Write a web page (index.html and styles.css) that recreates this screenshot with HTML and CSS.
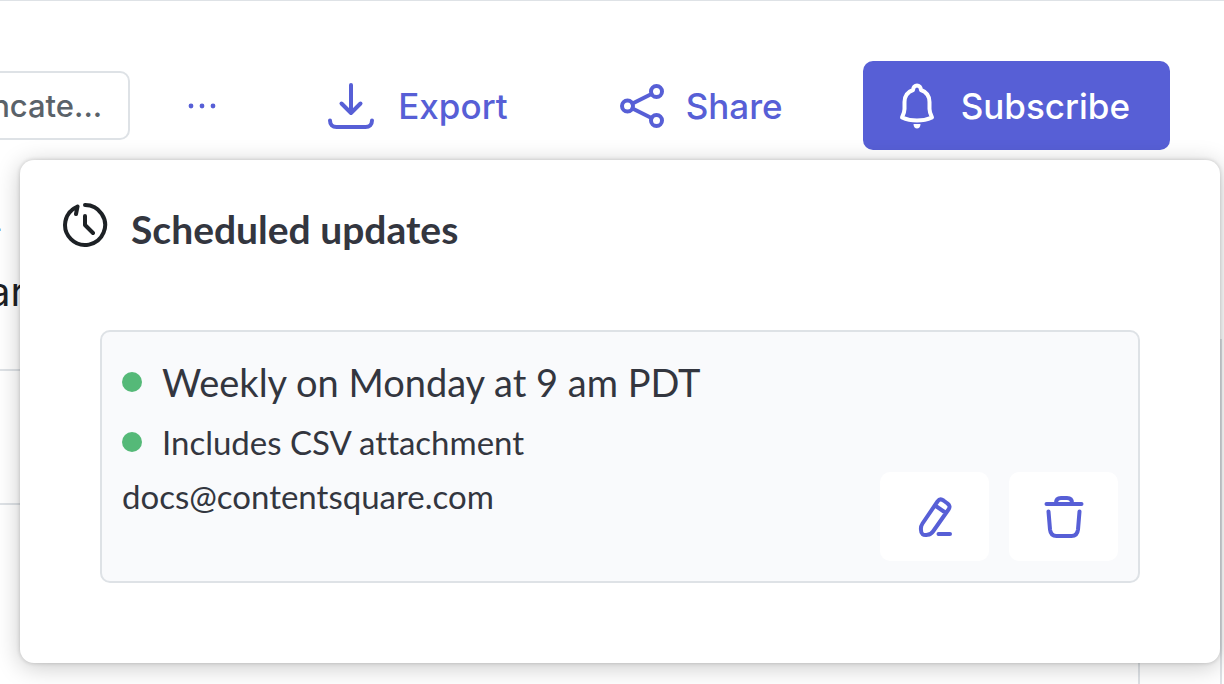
FILE: index.html
```
<!DOCTYPE html>
<html lang="en">
<head>
  <meta charset="UTF-8" />
  <meta name="viewport" content="width=device-width, initial-scale=1.0"/>
  <title>Scheduled updates</title>
  <link rel="stylesheet" href="styles.css">
</head>
<body>

  <header class="toolbar">
    <button type="button" class="filter">Truncate...</button>
    <button type="button" class="tool more" aria-label="More actions">
      <svg width="28" height="6" viewBox="0 0 28 6" fill="currentColor">
        <circle cx="3" cy="3" r="2.4"/><circle cx="14" cy="3" r="2.4"/><circle cx="25" cy="3" r="2.4"/>
      </svg>
    </button>
    <button type="button" class="tool export">
      <svg class="icon" viewBox="0 0 48 48">
        <path d="M24 3V31M14.500 21.500L24 31l9.500-9.500M3 38.500c0 4 2.500 6.500 6.500 6.500h29c4 0 6.500-2.500 6.500-6.500"/>
      </svg>
      Export
    </button>
    <button type="button" class="tool share">
      <svg class="icon" viewBox="0 0 48 48">
        <circle cx="9.500" cy="24" r="5.500"/><circle cx="38.500" cy="9.500" r="5.500"/><circle cx="38.500" cy="38.500" r="5.500"/>
        <path d="M14.500 21.500l19-9.500M14.500 26.500l19 9.500"/>
      </svg>
      Share
    </button>
    <button type="button" class="tool subscribe">
      <svg class="icon" viewBox="0 0 48 48">
        <path d="M20 8C20 2 28 2 28 8C33.500 10 36.500 14 36.500 20V27c0 3.500 1 5.500 2.500 8.500C30 39.500 18 39.500 9 35.500c1.500-3 2.500-5 2.500-8.500V20C11.500 14 14.500 10 20 8z"/>
        <path d="M20.500 42h7c0 6-7 6-7 0z" fill="currentColor" stroke="none"/>
      </svg>
      Subscribe
    </button>
  </header>

  <main class="page">
    <p class="page-note">-</p>
    <h1 class="page-title">ar</h1>
    <div class="page-body">
      <div class="grid">
        <div class="grid-row"></div>
      </div>
    </div>
  </main>

  <section class="popover" aria-labelledby="popover-title">
    <div class="popover-head">
      <svg class="icon clock" viewBox="0 0 48 48">
        <path d="M24 4a20 20 0 1 1-7.500 1.500M16.500 5.500C11 8 4 14 4 24M16.500 5.500L15 13M24 15v9l8 8"/>
      </svg>
      <h2 id="popover-title">Scheduled updates</h2>
    </div>

    <div class="schedule">
      <div class="schedule-info">
        <p class="schedule-line schedule-time"><span class="dot"></span>Weekly on Monday at 9 am PDT</p>
        <p class="schedule-line"><span class="dot"></span>Includes CSV attachment</p>
        <p class="schedule-mail">docs@contentsquare.com</p>
      </div>
      <div class="schedule-actions">
        <button type="button" class="action" aria-label="Edit">
          <svg class="icon" viewBox="0 0 48 48">
            <path d="M26.500 8.500q2.500-3.500 6-1l4 3q3.500 2.500 1 6L22 38.500q-2 2.800-5.500 3.300c-4.500 1-6.500-1-6.500-4.800q-.5-3.500 1.500-6.500zM24 12.500l11 7.500M27.500 41h11.500"/>
          </svg>
        </button>
        <button type="button" class="action" aria-label="Delete">
          <svg class="icon" viewBox="0 0 48 48">
            <path d="M6.500 11h35M16 10c0-4 2-5 5-5h6c3 0 5 1 5 5M8.500 18.500l1.500 18c.5 4.500 2.500 6.500 6.500 6.500h15c4 0 6-2 6.500-6.500l1.500-18"/>
          </svg>
        </button>
      </div>
    </div>
  </section>

</body>
</html>
```

FILE: styles.css
```
* {
  box-sizing: border-box;
}

body {
  margin: 0;
  height: 100vh;
  display: flex;
  flex-direction: column;
  position: relative;
  overflow: hidden;
  background: #fff;
  color: #33363f;
  font-family: Lato, "Liberation Sans", sans-serif;
  font-size: 33px;
  font-variant-ligatures: none;
}

h1, h2, p {
  margin: 0;
}

button {
  font: inherit;
  border: 0;
  cursor: pointer;
}

.icon {
  width: 48px;
  height: 48px;
  flex: none;
  fill: none;
  stroke: currentColor;
  stroke-width: 4;
  stroke-linecap: round;
  stroke-linejoin: round;
}

.toolbar {
  display: flex;
  justify-content: flex-end;
  align-items: center;
  padding: 60px 54px 0 0;
  border-top: 1px solid #dee2e6;
  font-family: Inter, "Liberation Sans", sans-serif;
  font-weight: 500;
}

.filter {
  height: 69px;
  padding: 0 26px;
  border: 2px solid #dee2e6;
  border-radius: 10px;
  background: #fff;
  color: #5a6269;
  font-size: 31px;
}

.tool {
  display: flex;
  align-items: center;
  gap: 20px;
  height: 89px;
  flex: none;
  padding: 0 40px;
  background: none;
  color: #575fd6;
  font-size: 35px;
  white-space: nowrap;
}

.more {
  padding: 0 56px 0 58px;
}

.export {
  gap: 23px;
  padding-left: 55px;
}

.share {
  padding-left: 70px;
}

.tool.subscribe {
  margin-left: 40px;
  padding-left: 30px;
  border-radius: 10px;
  background: #575fd6;
  color: #fff;
}

.page {
  flex: 1;
  display: flex;
  flex-direction: column;
}

.page-note {
  margin-top: 67px;
  margin-left: -10px;
  line-height: 20px;
}

.page-title {
  margin-top: 29px;
  margin-left: -12px;
  color: #1d2125;
  font-family: Inter, "Liberation Sans", sans-serif;
  font-size: 40px;
  font-weight: 400;
  line-height: 52px;
}

.page-body {
  flex: 1;
  margin-top: 21px;
  margin-right: 2px;
  padding: 30px 80px 0 0;
  border-right: 2px solid #dee2e6;
}

.grid {
  height: 100%;
  border: solid #dee2e6;
  border-width: 2px 2px 0 0;
}

.grid-row {
  height: 134px;
  border-bottom: 2px solid #dee2e6;
}

.popover {
  position: absolute;
  top: 160px;
  left: 20px;
  right: 4px;
  padding: 40px 80px 80px;
  border-radius: 14px;
  background: #fff;
  box-shadow: 0 4px 24px rgba(0, 0, 0, 0.22), 0 0 4px rgba(0, 0, 0, 0.18);
}

.popover-head {
  display: flex;
  align-items: center;
  gap: 22px;
  height: 58px;
  margin: 0 0 72px -39px;
}

.popover-head h2 {
  font-size: 39px;
  font-weight: 700;
  line-height: 58px;
}

.clock {
  margin-bottom: 8px;
  color: #1d2125;
}

.schedule {
  display: flex;
  justify-content: space-between;
  align-items: flex-end;
  padding: 20px;
  border: 2px solid #dee2e6;
  border-radius: 10px;
  background: #f9fafc;
}

.schedule-info {
  height: 209px;
}

.schedule-line {
  display: flex;
  align-items: center;
  gap: 20px;
  line-height: 58px;
  height: 60px;
}

.schedule-time {
  font-size: 38px;
}

.dot {
  width: 20px;
  height: 20px;
  border-radius: 50%;
  background: #55b978;
}

.schedule-mail {
  line-height: 48px;
}

.schedule-actions {
  display: flex;
  gap: 20px;
}

.action {
  display: flex;
  align-items: center;
  justify-content: center;
  width: 109px;
  height: 89px;
  border-radius: 10px;
  background: #fff;
  color: #575fd6;
}
```
